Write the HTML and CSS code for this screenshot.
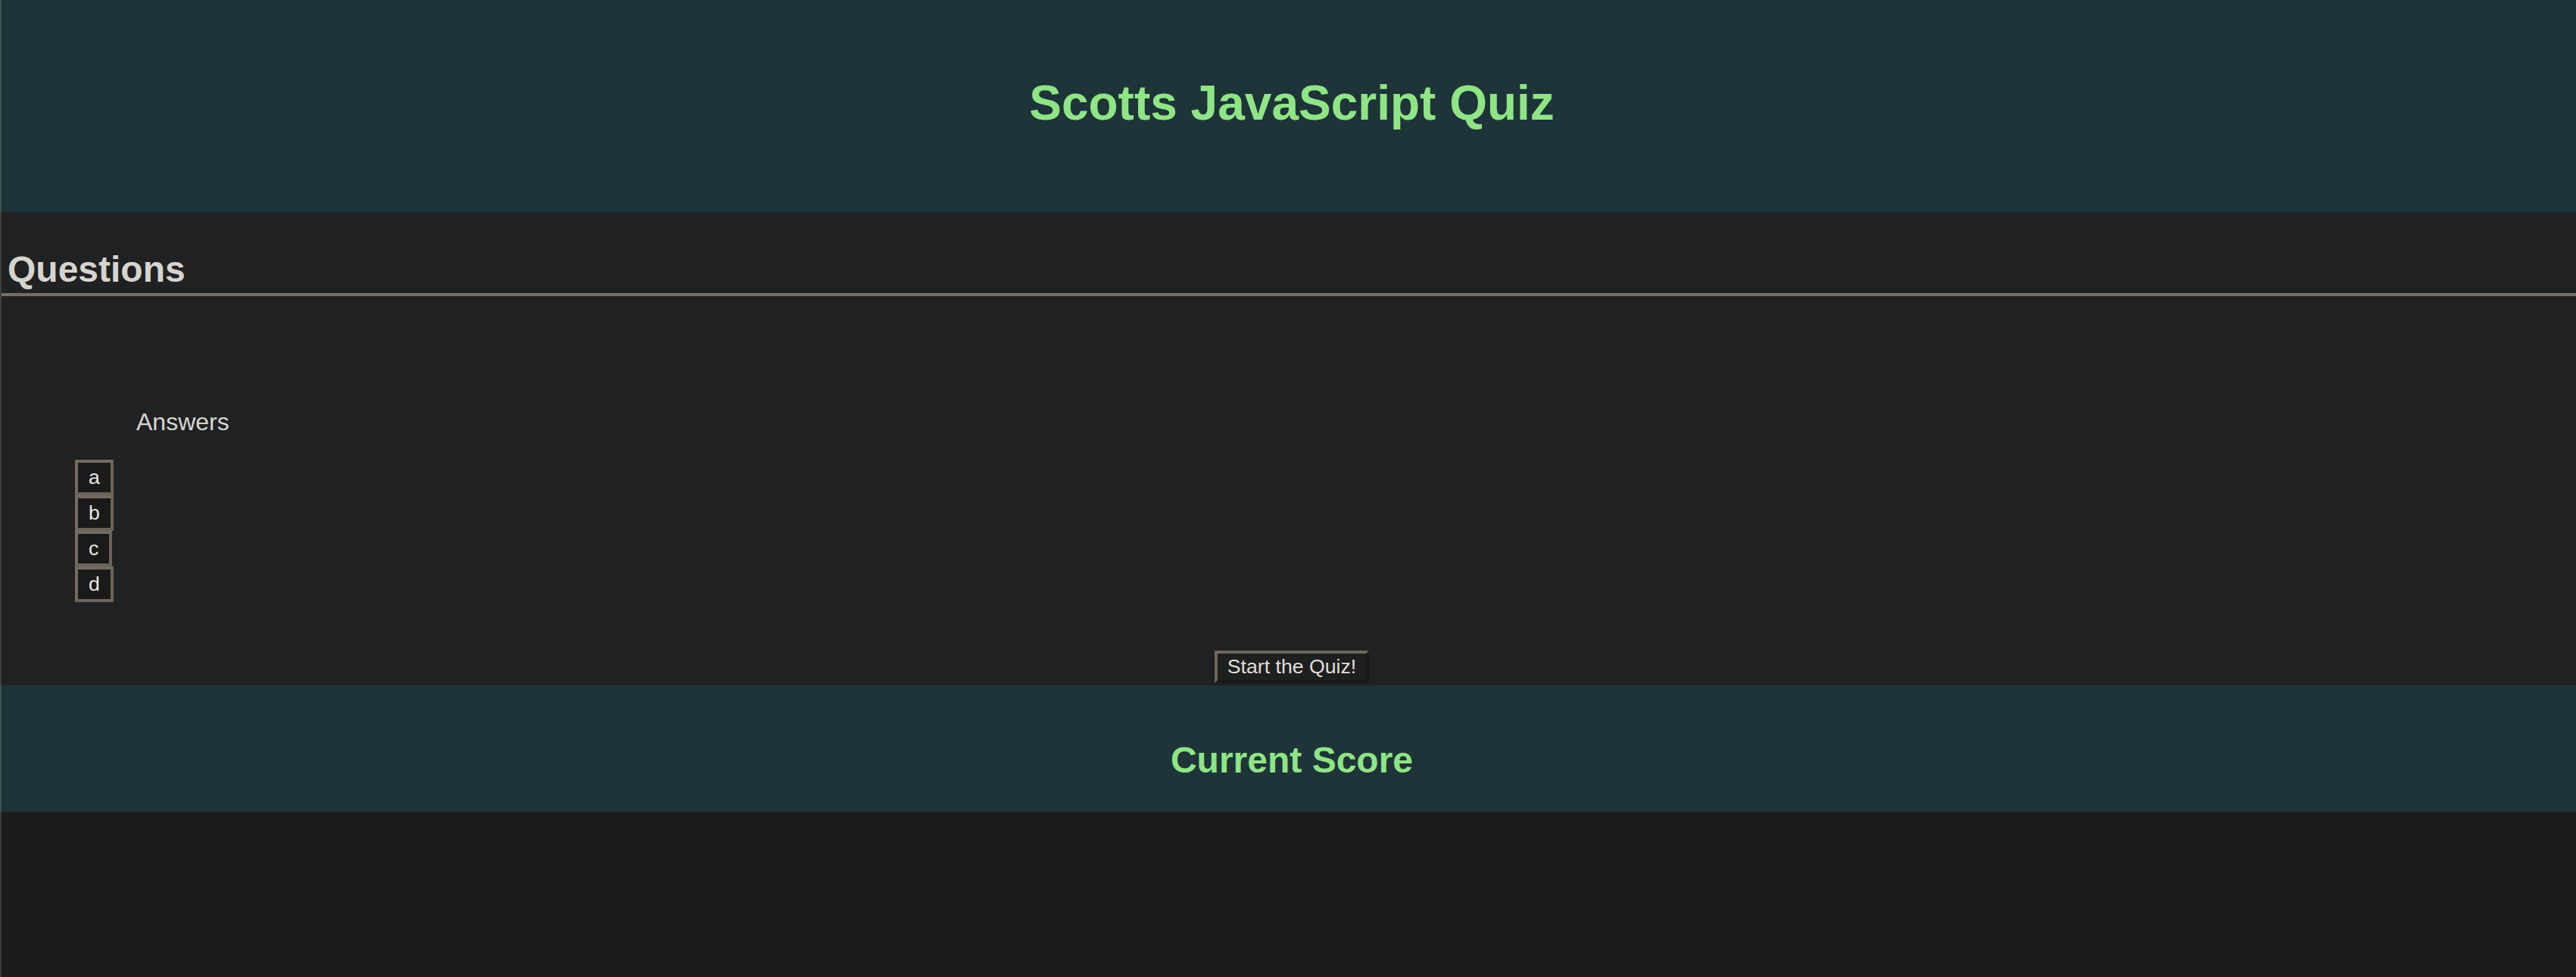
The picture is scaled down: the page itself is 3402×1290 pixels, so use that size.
FILE: index.html
```html
<!DOCTYPE html>
<html lang="en">
<head>
<meta charset="utf-8">
<title>Scotts JavaScript Quiz</title>
<link rel="stylesheet" href="styles.css">
</head>
<body>
<header class="site-header">
  <h1 class="title">Scotts JavaScript Quiz</h1>
</header>
<main class="quiz">
  <h2 class="section-title">Questions</h2>
  <div class="question"></div>
  <p class="answers-label">Answers</p>
  <div class="answers">
    <button class="answer">a</button>
    <button class="answer">b</button>
    <button class="answer">c</button>
    <button class="answer">d</button>
  </div>
  <div class="start-row">
    <button class="start">Start the Quiz!</button>
  </div>
</main>
<footer class="score">
  <h2 class="score-title">Current Score</h2>
</footer>
</body>
</html>
```

FILE: styles.css
```css
html, body {
  margin: 0;
  padding: 0;
}

body {
  background: #1b1c1b;
  font-family: "Liberation Sans", Arial, Helvetica, sans-serif;
  color: #d7d5d0;
  min-height: 1290px;
  position: relative;
}

body::before {
  content: "";
  position: fixed;
  left: 0;
  top: 0;
  bottom: 0;
  width: 2px;
  background: rgba(255, 255, 255, 0.14);
}

.site-header {
  background: #1e3439;
  height: 280px;
  box-sizing: border-box;
  padding: 99px 0 0 10px;
  text-align: center;
}

.title {
  margin: 0;
  font-size: 64px;
  line-height: 74px;
  font-weight: 700;
  color: #8fe584;
}

.quiz {
  background: #202123;
  padding: 48px 0 3px;
  display: flex;
  flex-direction: column;
}

.section-title {
  margin: 0 0 0 2px;
  padding: 0 0 4px 8px;
  font-size: 48px;
  line-height: 55px;
  font-weight: 700;
  color: #d6d4cf;
  border-bottom: 4px solid #766f63;
}

.question {
  height: 148px;
}

.answers-label {
  margin: 0 0 0 180px;
  font-size: 32px;
  line-height: 37px;
  color: #d8d6d1;
}

.answers {
  margin: 31px 0 0 99px;
  display: flex;
  flex-direction: column;
  align-items: flex-start;
}

.answer {
  font-family: "Liberation Sans", Arial, Helvetica, sans-serif;
  font-size: 26.67px;
  line-height: 31px;
  padding: 4px 14px;
  background: #1a1a1a;
  color: #e8e6e3;
  border: 4px solid;
  border-color: #726b5f #6a6357 #6a6357 #726b5f;
  margin: 0;
}

.start-row {
  margin-top: 64px;
  padding-left: 10px;
  display: flex;
  justify-content: center;
}

.start {
  font-family: "Liberation Sans", Arial, Helvetica, sans-serif;
  font-size: 26.67px;
  line-height: 31px;
  padding: 2px 13px;
  background: #1e1f1f;
  color: #e0ded9;
  border: 4px solid;
  border-color: #6e675c #18191a #18191a #6e675c;
  margin: 0;
}

.score {
  background: #1e3439;
  height: 167px;
  box-sizing: border-box;
  padding: 71px 0 0 10px;
  text-align: center;
}

.score-title {
  margin: 0;
  font-size: 48px;
  line-height: 56px;
  font-weight: 700;
  color: #8fe584;
}
```
